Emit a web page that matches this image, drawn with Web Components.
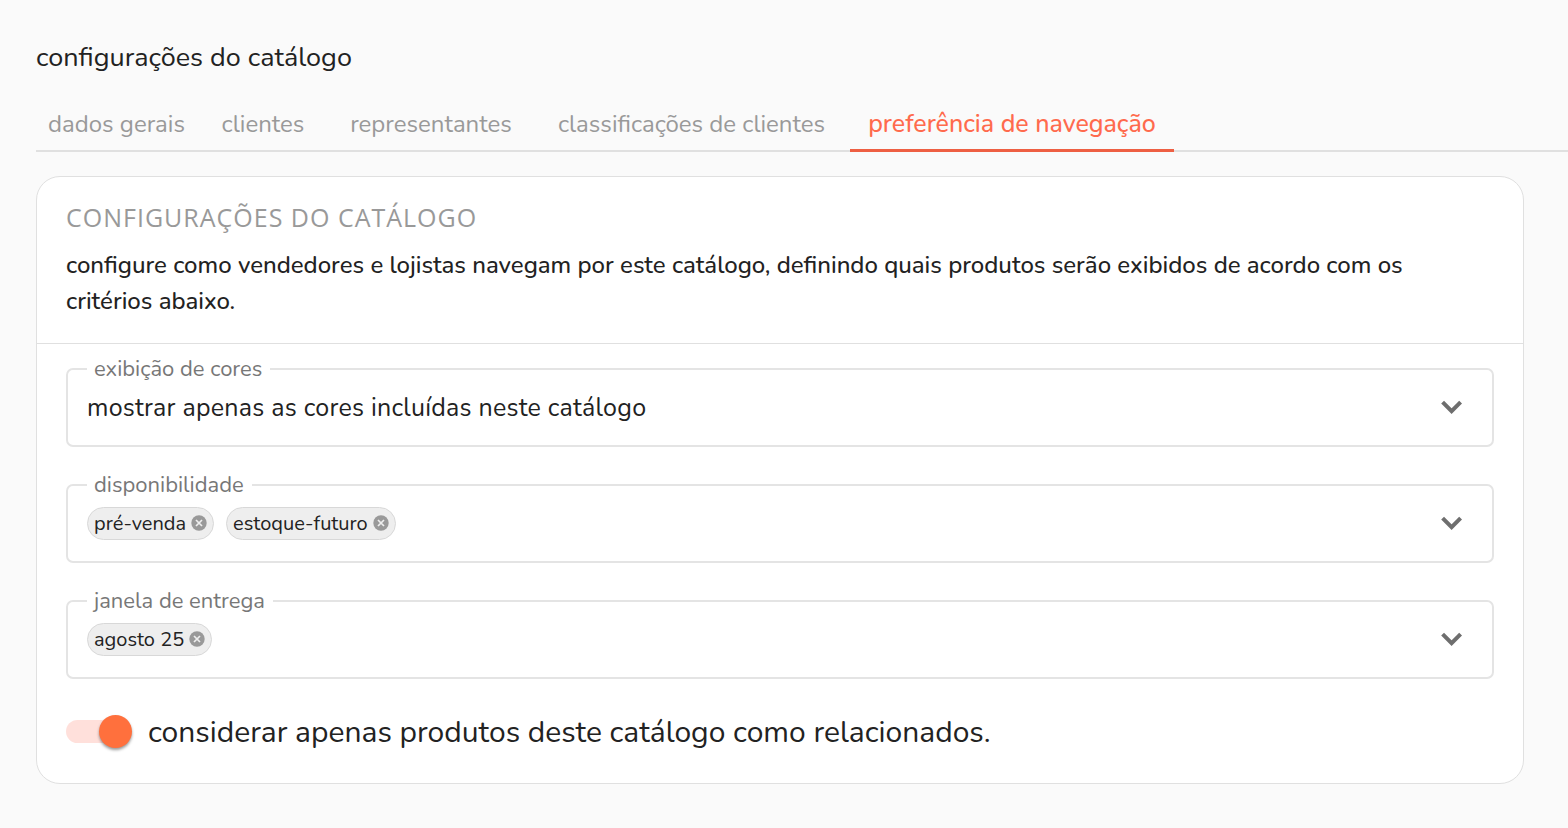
<!DOCTYPE html>
<html lang="pt-BR">
<head>
<meta charset="utf-8">
<meta name="viewport" content="width=device-width, initial-scale=1">
<title>configurações do catálogo</title>
<style>
  body { margin: 0; background: #fafafa; color: #222; font-family: Nunito, Lato, "Open Sans", sans-serif; }
</style>
</head>
<body>
<catalog-page>
  <tab-bar slot="tabs">
    <tab-link>dados gerais</tab-link>
    <tab-link>clientes</tab-link>
    <tab-link>representantes</tab-link>
    <tab-link>classificações de clientes</tab-link>
    <tab-link active>preferência de navegação</tab-link>
  </tab-bar>
  <settings-card>
    <span slot="title">CONFIGURAÇÕES DO CATÁLOGO</span>
    <span slot="description">configure como vendedores e lojistas navegam por este catálogo, definindo quais produtos serão exibidos de acordo com os critérios abaixo.</span>
    <select-field label="exibição de cores" value="mostrar apenas as cores incluídas neste catálogo"></select-field>
    <select-field label="disponibilidade">
      <filter-chip>pré-venda</filter-chip>
      <filter-chip>estoque-futuro</filter-chip>
    </select-field>
    <select-field label="janela de entrega">
      <filter-chip>agosto 25</filter-chip>
    </select-field>
    <toggle-switch slot="footer">considerar apenas produtos deste catálogo como relacionados.</toggle-switch>
  </settings-card>
</catalog-page>

<script>
const define = (name, html, setup) => customElements.define(name, class extends HTMLElement {
  connectedCallback() {
    if (this.shadowRoot) return;
    const root = this.attachShadow({ mode: 'open' });
    root.innerHTML = html;
    if (setup) setup(this, root);
  }
});

define('catalog-page', `
  <style>
    :host { display: block; padding: 40px 0 44px 36px; }
    h1 { margin: 0; font-size: 27px; line-height: 36px; font-weight: 400; }
    main { margin: 24px 44px 0 0; }
  </style>
  <h1>configurações do catálogo</h1>
  <slot name="tabs"></slot>
  <main><slot></slot></main>`);

define('tab-bar', `
  <style>
    :host { display: block; margin-top: 24px; }
    nav { display: grid; grid-template-columns: 161px 132px 204px 317px 324px; border-bottom: 2px solid #e0e0e0; }
  </style>
  <nav aria-label="seções"><slot></slot></nav>`);

define('tab-link', `
  <style>
    :host { display: block; }
    a { display: block; height: 50px; line-height: 48px; font-size: 24px; color: #999; text-align: center;
        text-decoration: none; white-space: nowrap; }
    :host([active]) a { color: #ff6a4d; height: 49px; margin-bottom: -2px; border-bottom: 3px solid #ee5f43; font-size: 25px; font-weight: 500; }
  </style>
  <a href="#"><slot></slot></a>`, (el, root) => {
    if (el.hasAttribute('active')) root.querySelector('a').setAttribute('aria-current', 'page');
  });

define('settings-card', `
  <style>
    :host { display: block; background: #fff; border: 1px solid #e0e0e0; border-radius: 24px; }
    header { padding: 22px 29px 24px; border-bottom: 1px solid #e0e0e0; }
    h2 { margin: 0; font: 400 25px/36px "Open Sans", sans-serif; letter-spacing: 1px; color: #999; }
    p { margin: 12px 0 0; font-size: 24px; line-height: 36px; font-weight: 500; }
    .fields { display: grid; gap: 26px; padding: 13px 29px 0; }
    footer { padding: 32px 29px; }
  </style>
  <header>
    <h2><slot name="title"></slot></h2>
    <p><slot name="description"></slot></p>
  </header>
  <div class="fields"><slot></slot></div>
  <footer><slot name="footer"></slot></footer>`);

define('select-field', `
  <style>
    :host { display: block; }
    fieldset { margin: 0; padding: 0 28px 12px 19px; min-width: 0; border: 2px solid #e4e4e4; border-radius: 7px; }
    legend { padding: 0 8px 0 7px; font-size: 22px; line-height: 24px; color: #777; }
    .row { display: grid; align-items: center; height: 52px; }
    .row > * { grid-area: 1 / 1; }
    select { appearance: none; width: 100%; height: 52px; margin: 0; padding: 2px 40px 0 0; border: 0; background: none;
             font: inherit; font-size: 25px; letter-spacing: 0.01em; color: #222; outline-offset: 2px; cursor: pointer; }
    .chips { display: flex; gap: 12px; justify-self: start; z-index: 1; }
    svg { justify-self: end; pointer-events: none; }
  </style>
  <fieldset>
    <legend><label for="choice"></label></legend>
    <div class="row">
      <select id="choice"><option></option></select>
      <div class="chips"><slot></slot></div>
      <svg width="24" height="16" viewBox="0 0 24 16" fill="none" stroke="#6e6e6e" stroke-width="4" aria-hidden="true"><path d="M2.6 3.2 11.6 12.2 20.6 3.2"/></svg>
    </div>
  </fieldset>`, (el, root) => {
    root.querySelector('label').textContent = el.getAttribute('label');
    root.querySelector('option').textContent = el.getAttribute('value') || '';
  });

define('filter-chip', `
  <style>
    :host { display: flex; align-items: center; gap: 5px; box-sizing: border-box; height: 33px; padding: 0 6px;
            border: 1px solid #d8d8d8; border-radius: 17px; background: #eee; font-size: 20px; line-height: 31px; }
    button { display: block; width: 16px; height: 16px; margin: 0; padding: 0; border: 0; background: none; cursor: pointer; }
    svg { display: block; }
  </style>
  <span><slot></slot></span>
  <button type="button" aria-label="remover"><svg width="16" height="16" viewBox="0 0 16 16" aria-hidden="true"><circle cx="8" cy="8" r="7.7" fill="#999"/><path d="M5 5l6 6M11 5l-6 6" stroke="#eee" stroke-width="1.7"/></svg></button>`,
  (el, root) => root.querySelector('button').addEventListener('click', () => el.remove()));

define('toggle-switch', `
  <style>
    :host { display: block; }
    label { display: flex; align-items: center; gap: 16px; font-size: 30px; line-height: 40px; cursor: pointer; }
    span { height: 36px; }
    input { appearance: none; flex: none; display: flex; align-items: center; width: 66px; height: 23px; margin: 0;
            border-radius: 12px; background: #ddd; cursor: pointer; }
    input::before { content: ""; width: 33px; height: 33px; border-radius: 50%; background: #fff; box-shadow: 0 2px 3px #0006; }
    input:checked { justify-content: flex-end; background: linear-gradient(90deg, #ffe0db 50px, transparent 50px); }
    input:checked::before { background: #ff703d; }
    label { height: 40px; }
  </style>
  <label><input type="checkbox" role="switch" checked><span><slot></slot></span></label>`);
</script>
</body>
</html>
